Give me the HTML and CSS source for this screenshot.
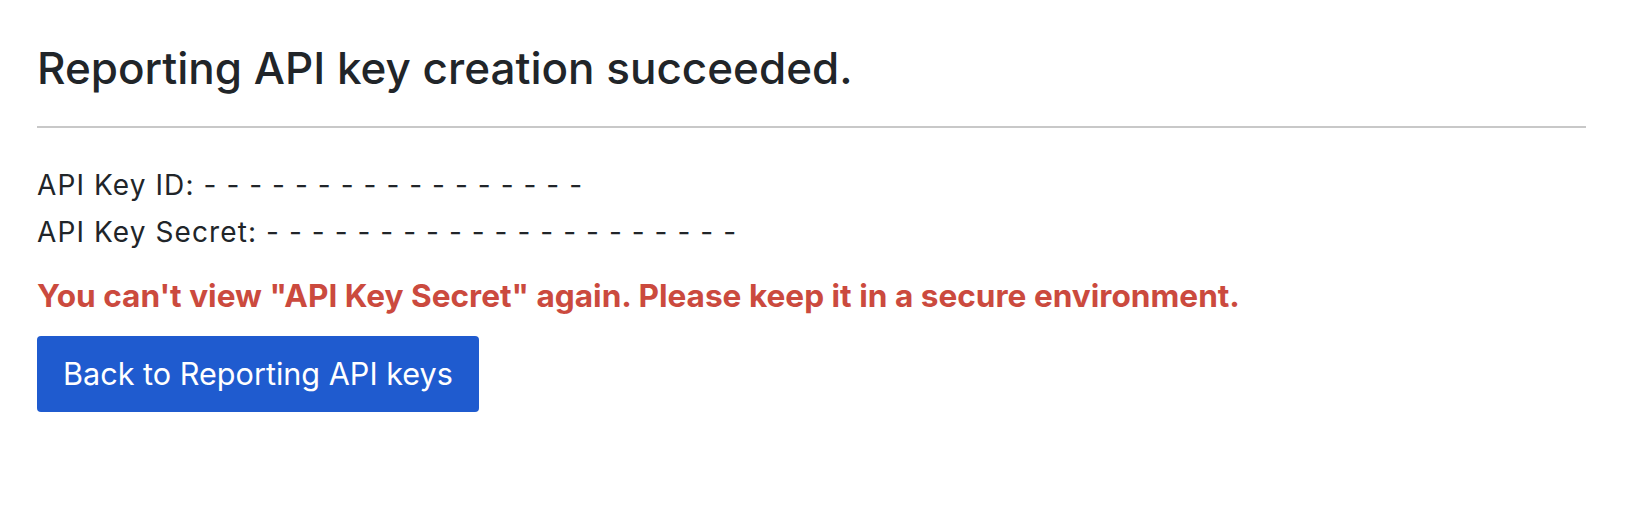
FILE: index.html
```html
<!DOCTYPE html>
<html lang="en">
    <head>
        <meta charset="UTF-8" />
        <meta name="viewport" content="width=device-width, initial-scale=1.0" />
        <title>Reporting API key created</title>
        <link rel="stylesheet" href="styles.css">
    </head>
    <body>
        <div class="page">
            <!-- Page title -->
            <h1 class="page-title">Reporting API key creation succeeded.</h1>
            <hr class="divider" />

            <!-- Key details -->
            <div class="key-details">
                <div class="key-row">API Key ID: <span class="masked">- - - - - - - - - - - - - - - - -</span></div>
                <div class="key-row">API Key Secret: <span class="masked">- - - - - - - - - - - - - - - - - - - - -</span></div>
            </div>

            <p class="warning">You can't view "API Key Secret" again. Please keep it in a secure environment.</p>

            <a href="#" class="btn-back">Back to Reporting API keys</a>
        </div>
    </body>
</html>
```

FILE: styles.css
```css
body {
    font-family: Inter, "Liberation Sans", Arial, sans-serif;
    margin: 0;
    padding: 0;
    background-color: #fff;
    color: #212529;
}

.page {
    padding: 42px 54px 0 37px;
}

.page-title {
    font-size: 44px;
    font-weight: 500;
    line-height: 52px;
    margin: 0;
}

.divider {
    border: 0;
    height: 2px;
    background-color: #c8c8c8;
    margin: 32px 0 34px 0;
}

.key-details {
    font-size: 28px;
    line-height: 47px;
    letter-spacing: 1.1px;
}

.masked {
    letter-spacing: 0;
    word-spacing: 2.1px;
}

.warning {
    color: #cb4a3e;
    font-size: 31.6px;
    font-weight: 700;
    line-height: 40px;
    margin: 20px 0 20px 0;
}

.btn-back {
    display: inline-block;
    background-color: #1f5bcf;
    color: #fff;
    font-size: 30.6px;
    line-height: 76px;
    padding: 0 26px 0 26px;
    border-radius: 4px;
    text-decoration: none;
}
```
